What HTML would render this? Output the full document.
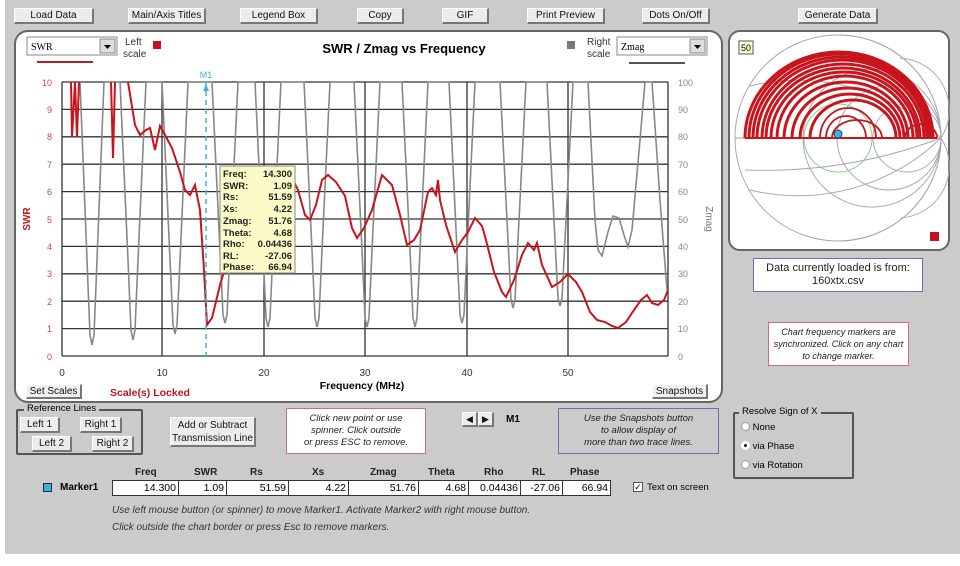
<!DOCTYPE html>
<html><head><meta charset="utf-8"><style>
*{margin:0;padding:0;box-sizing:border-box}
body{width:960px;height:566px;background:#fff;position:relative;overflow:hidden;font-family:"Liberation Sans",sans-serif;}
.bg{position:absolute;left:5px;top:0;width:955px;height:554px;background:#cbcbcb}
.a{position:absolute}
.btn{position:absolute;height:16px;background:#ececec;border:1px solid #fff;border-right:2px solid #777;border-bottom:2px solid #777;font-size:10px;text-align:center;line-height:13px;color:#111}
.box{position:absolute;background:#fff;font-style:italic;font-size:9.5px;text-align:center;line-height:12px;color:#222}
.grp{position:absolute;border:2px solid #555;border-radius:2px}
.cell{position:absolute;top:480px;height:16px;background:#fff;border:1px solid #333;font-size:10.5px;text-align:right;padding-right:2px;line-height:14px}
.hd{position:absolute;top:467px;font-size:10px;font-weight:bold;color:#222}
</style></head><body>
<div class="bg"></div>
<div class="btn" style="left:14px;top:8px;width:80px">Load Data</div>
<div class="btn" style="left:128px;top:8px;width:78px">Main/Axis Titles</div>
<div class="btn" style="left:240px;top:8px;width:78px">Legend Box</div>
<div class="btn" style="left:357px;top:8px;width:47px">Copy</div>
<div class="btn" style="left:442px;top:8px;width:47px">GIF</div>
<div class="btn" style="left:527px;top:8px;width:78px">Print Preview</div>
<div class="btn" style="left:642px;top:8px;width:68px">Dots On/Off</div>
<div class="btn" style="left:798px;top:8px;width:80px">Generate Data</div>

<div class="a" style="left:14px;top:30px;width:709px;height:373px;background:#fff;border:2px solid #666;border-radius:14px"></div>
<div class="a" style="left:728px;top:30px;width:222px;height:221px;background:#fff;border:2px solid #666;border-radius:12px"></div>

<svg class="a" style="left:0;top:0" width="960" height="566" xmlns="http://www.w3.org/2000/svg" font-family="Liberation Sans, sans-serif">
<rect x="27" y="37" width="90" height="18" fill="#fff" stroke="#888"/>
<text x="31" y="50" font-size="10" font-family="Liberation Serif">SWR</text>
<rect x="100" y="39" width="15" height="14" fill="#ddd" stroke="#888"/>
<path d="M104 45 L111 45 L107.5 49Z" fill="#000"/>
<line x1="37" y1="62" x2="93" y2="62" stroke="#b52025" stroke-width="2"/>
<text x="125" y="45" font-size="10" fill="#333">Left</text><text x="123" y="57" font-size="10" fill="#333">scale</text>
<rect x="153" y="41" width="8" height="8" fill="#c0141c"/>
<text x="404" y="53" font-size="13" font-weight="bold" text-anchor="middle">SWR / Zmag  vs  Frequency</text>
<rect x="567" y="41" width="8" height="8" fill="#777"/>
<text x="587" y="45" font-size="10" fill="#333">Right</text><text x="587" y="57" font-size="10" fill="#333">scale</text>
<rect x="617" y="37" width="90" height="18" fill="#fff" stroke="#888"/>
<text x="621" y="50" font-size="10" font-family="Liberation Serif">Zmag</text>
<rect x="690" y="39" width="15" height="14" fill="#ddd" stroke="#888"/>
<path d="M694 45 L701 45 L697.5 49Z" fill="#000"/>
<line x1="629" y1="63" x2="685" y2="63" stroke="#555" stroke-width="2"/>
<g stroke="#333" stroke-width="1.3">
<line x1="62" y1="82" x2="668" y2="82"/><line x1="62" y1="109.4" x2="668" y2="109.4"/><line x1="62" y1="136.8" x2="668" y2="136.8"/><line x1="62" y1="164.2" x2="668" y2="164.2"/><line x1="62" y1="191.6" x2="668" y2="191.6"/><line x1="62" y1="219" x2="668" y2="219"/><line x1="62" y1="246.4" x2="668" y2="246.4"/><line x1="62" y1="273.8" x2="668" y2="273.8"/><line x1="62" y1="301.2" x2="668" y2="301.2"/><line x1="62" y1="328.6" x2="668" y2="328.6"/><line x1="62" y1="356" x2="668" y2="356"/>
<line x1="62" y1="82" x2="62" y2="356"/><line x1="162" y1="82" x2="162" y2="356"/><line x1="264" y1="82" x2="264" y2="356"/><line x1="365" y1="82" x2="365" y2="356"/><line x1="467" y1="82" x2="467" y2="356"/><line x1="568" y1="82" x2="568" y2="356"/><line x1="668" y1="82" x2="668" y2="356"/>
</g>
<g font-size="9" fill="#c44" text-anchor="end">
<text x="52" y="86">10</text><text x="52" y="113">9</text><text x="52" y="140">8</text><text x="52" y="168">7</text><text x="52" y="195">6</text><text x="52" y="223">5</text><text x="52" y="250">4</text><text x="52" y="277">3</text><text x="52" y="305">2</text><text x="52" y="332">1</text><text x="52" y="360">0</text>
</g>
<g font-size="9" fill="#888">
<text x="678" y="86">100</text><text x="678" y="113">90</text><text x="678" y="140">80</text><text x="678" y="168">70</text><text x="678" y="195">60</text><text x="678" y="223">50</text><text x="678" y="250">40</text><text x="678" y="277">30</text><text x="678" y="305">20</text><text x="678" y="332">10</text><text x="678" y="360">0</text>
</g>
<g font-size="10" fill="#333" text-anchor="middle">
<text x="62" y="376">0</text><text x="162" y="376">10</text><text x="264" y="376">20</text><text x="365" y="376">30</text><text x="467" y="376">40</text><text x="568" y="376">50</text>
</g>
<text x="30" y="219" font-size="10" font-weight="bold" fill="#c0141c" transform="rotate(-90 30 219)" text-anchor="middle">SWR</text>
<text x="706" y="219" font-size="10" fill="#777" transform="rotate(90 706 219)" text-anchor="middle">Zmag</text>
<text x="362" y="389" font-size="10.5" font-weight="bold" text-anchor="middle">Frequency (MHz)</text>
<text x="110" y="396" font-size="10.5" font-weight="bold" fill="#c0141c">Scale(s) Locked</text>
<path d="M80 82 L87 260 L90 335 L92 345 L94 335 L97 260 L104 82 L120 82 L128 260 L131 330 L133 340 L135 330 L138 260 L146 82 L162 82 L170 260 L173 325 L175 334 L177 325 L180 260 L188 82 L212 82 L220 250 L223 315 L225 323 L227 315 L230 250 L238 82 L255 82 L263 250 L266 318 L268 327 L270 318 L273 250 L281 82 L304 82 L312 250 L315 318 L317 327 L319 318 L322 250 L330 82 L354 82 L362 250 L365 318 L367 327 L369 318 L372 250 L380 82 L402 82 L410 250 L413 318 L415 327 L417 318 L420 250 L428 82 L449 82 L457 250 L460 315 L462 323 L464 315 L467 250 L475 82 L500 82 L508 240 L511 300 L513 308 L515 300 L518 240 L526 82 L547 82 L555 240 L558 298 L560 306 L562 298 L565 240 L573 82 L588 82 L595 220 L598 250 L602 256 L608 232 L613 216 L619 218 L624 235 L628 247 L632 230 L640 140 L645 82 L652 82 L660 200 L667 290" fill="none" stroke="#888" stroke-width="1.6"/>
<path d="M71 82 L72 137 L75 82 L77 137 L79 82 M111 82 L113 158 L115 82 M128 82 L135 125 L140 135 L146 130 L150 128 L155 150 L160 126 L165 135 L172 148 L180 172 L185 190 L190 195 L195 185 L200 210 L204 270 L207 325 L212 318 L220 285 L226 265 M293 180 L298 190 L305 215 L310 220 L316 205 L322 180 L328 175 L336 182 L345 196 L352 228 L357 238 L364 228 L372 210 L382 175 L392 185 L400 215 L407 245 L414 240 L420 230 L428 192 L432 188 L436 195 L438 180 L440 200 L446 225 L455 252 L462 240 L468 232 L475 218 L482 226 L486 240 L494 272 L502 292 L506 297 L514 280 L522 255 L528 243 L534 250 L537 243 L542 265 L552 287 L560 282 L568 274 L576 282 L582 292 L590 312 L597 320 L605 322 L612 326 L618 328 L626 322 L634 310 L641 300 L647 295 L652 303 L658 305 L664 300 L668 290" fill="none" stroke="#c8141c" stroke-width="2"/>
<line x1="206" y1="82" x2="206" y2="358" stroke="#3bb3d0" stroke-width="1.5" stroke-dasharray="5 4"/>
<text x="206" y="78" font-size="9" fill="#3bb3d0" text-anchor="middle">M1</text>
<path d="M206 84 L203 91 L209 91Z" fill="#3bb3d0"/>
<rect x="220" y="166" width="75" height="107" fill="#fbfbc8" stroke="#888"/>
<g font-size="9.5" font-weight="bold" fill="#222">
<text x="223" y="177">Freq:</text><text x="223" y="189">SWR:</text><text x="223" y="200">Rs:</text><text x="223" y="212">Xs:</text><text x="223" y="224">Zmag:</text><text x="223" y="236">Theta:</text><text x="223" y="247">Rho:</text><text x="223" y="259">RL:</text><text x="223" y="270">Phase:</text>
</g>
<g font-size="9.5" font-weight="bold" fill="#222" text-anchor="end">
<text x="292" y="177">14.300</text><text x="292" y="189">1.09</text><text x="292" y="200">51.59</text><text x="292" y="212">4.22</text><text x="292" y="224">51.76</text><text x="292" y="236">4.68</text><text x="292" y="247">0.04436</text><text x="292" y="259">-27.06</text><text x="292" y="270">66.94</text>
</g>
<g fill="none" stroke="#aaa" stroke-width="1">
<circle cx="838" cy="138" r="103"/>
<line x1="735" y1="138" x2="941" y2="138"/>
<circle cx="872" cy="138" r="69"/>
<circle cx="889" cy="138" r="52"/>
<circle cx="907" cy="138" r="34"/>
<path d="M941 138 A206 206 0 0 1 750 190"/>
<path d="M941 138 A103 103 0 0 1 838 241"/>
<path d="M941 138 A52 52 0 0 1 900 218"/>
<path d="M941 138 A206 206 0 0 0 750 86"/>
<path d="M941 138 A103 103 0 0 0 838 35"/>
<path d="M941 138 A52 52 0 0 0 900 58"/>
<path d="M941 138 A500 500 0 0 1 745 170"/>
</g>
<circle cx="838" cy="138" r="34" fill="none" stroke="#8c8" stroke-width="1"/>
<g fill="none" stroke="#c8141c" stroke-width="3">
<path d="M745 138 A94 86 0 0 1 933 138"/><path d="M749 138 A91 84 0 0 1 931 138"/><path d="M753 138 A88 81 0 0 1 929 138"/><path d="M757 138 A85 78 0 0 1 927 138"/><path d="M762 138 A81 74 0 0 1 924 138"/><path d="M766 138 A77 70 0 0 1 920 138"/><path d="M771 138 A73 66 0 0 1 917 138"/><path d="M777 138 A68 62 0 0 1 913 138"/><path d="M784 138 A62 56 0 0 1 908 138"/><path d="M792 138 A56 50 0 0 1 904 138"/><path d="M800 138 A50 44 0 0 1 900 138"/><path d="M810 138 A43 38 0 0 1 896 138"/>
</g>
<g fill="none" stroke="#c8141c" stroke-width="1.8">
<path d="M820 138 A28 30 0 0 1 876 138"/><path d="M826 138 A20 22 0 0 1 866 138"/><path d="M832 138 A25 18 0 0 1 882 138"/><path d="M905 138 A16 14 0 0 1 937 138"/>
</g>
<line x1="745" y1="138" x2="937" y2="138" stroke="#c8141c" stroke-width="2"/>
<circle cx="838" cy="134" r="4" fill="#3bb3d0" stroke="#246" stroke-width="1"/>
<rect x="739" y="41" width="14" height="13" fill="#ffffd8" stroke="#555"/>
<text x="741" y="51" font-size="9">50</text>
<rect x="930" y="232" width="9" height="9" fill="#c0141c"/>
</svg>

<div class="btn" style="left:26px;top:384px;width:56px;height:15px;background:#f0f0f0">Set Scales</div>
<div class="btn" style="left:652px;top:384px;width:56px;height:15px;background:#f0f0f0">Snapshots</div>

<div class="box" style="left:753px;top:258px;width:170px;height:34px;border:1.5px solid #6670aa;font-style:normal;font-size:11px;line-height:13px;padding-top:3px">Data currently  loaded is from:<br>160xtx.csv</div>
<div class="box" style="left:768px;top:322px;width:141px;height:44px;border:1.5px solid #d07070;font-size:9px;line-height:12px;padding-top:3px">Chart frequency markers are synchronized.  Click on any chart to change marker.</div>

<div class="grp" style="left:16px;top:409px;width:127px;height:46px"></div>
<div class="a" style="left:24px;top:403px;background:#cbcbcb;font-size:9.5px;padding:0 3px">Reference Lines</div>
<div class="btn" style="left:20px;top:417px;width:40px">Left 1</div>
<div class="btn" style="left:80px;top:417px;width:42px">Right 1</div>
<div class="btn" style="left:32px;top:436px;width:40px">Left 2</div>
<div class="btn" style="left:92px;top:436px;width:42px">Right 2</div>
<div class="btn" style="left:170px;top:417px;width:86px;height:30px;line-height:13px;padding-top:1px">Add or Subtract<br>Transmission Line</div>
<div class="box" style="left:286px;top:408px;width:140px;height:46px;border:1.5px solid #d07070;padding-top:4px">Click new point or use<br>spinner.  Click outside<br>or press ESC to remove.</div>
<div class="btn" style="left:462px;top:412px;width:16px;height:15px;font-size:9px">◀</div>
<div class="btn" style="left:478px;top:412px;width:16px;height:15px;font-size:9px">▶</div>
<div class="a" style="left:506px;top:414px;font-size:10px;font-weight:bold">M1</div>
<div class="box" style="left:558px;top:408px;width:161px;height:46px;border:1.5px solid #6670aa;background:#cbcbcb;padding-top:4px">Use the Snapshots button<br>to allow display of<br>more than two trace lines.</div>

<div class="grp" style="left:733px;top:412px;width:121px;height:67px"></div>
<div class="a" style="left:739px;top:406px;background:#cbcbcb;font-size:9.5px;padding:0 3px">Resolve Sign of X</div>
<div class="a" style="left:741px;top:422px;font-size:9.5px"><span style="display:inline-block;width:9px;height:9px;border-radius:50%;background:#fff;border:1px solid #999;vertical-align:-1px"></span> None</div>
<div class="a" style="left:741px;top:441px;font-size:9.5px"><span style="display:inline-block;width:9px;height:9px;border-radius:50%;background:#fff;border:3px solid #fff;box-shadow:inset 0 0 0 2px #000;vertical-align:-1px"></span> via Phase</div>
<div class="a" style="left:741px;top:460px;font-size:9.5px"><span style="display:inline-block;width:9px;height:9px;border-radius:50%;background:#fff;border:1px solid #999;vertical-align:-1px"></span> via Rotation</div>

<div class="hd" style="left:135px">Freq</div><div class="hd" style="left:194px">SWR</div><div class="hd" style="left:250px">Rs</div><div class="hd" style="left:312px">Xs</div><div class="hd" style="left:370px">Zmag</div><div class="hd" style="left:428px">Theta</div><div class="hd" style="left:484px">Rho</div><div class="hd" style="left:532px">RL</div><div class="hd" style="left:570px">Phase</div>
<div class="a" style="left:43px;top:483px;width:9px;height:9px;background:#3bb3d0;border:1px solid #226"></div>
<div class="a" style="left:60px;top:482px;font-size:10px;font-weight:bold">Marker1</div>
<div class="cell" style="left:112px;width:67px">14.300</div>
<div class="cell" style="left:178px;width:49px">1.09</div>
<div class="cell" style="left:226px;width:63px">51.59</div>
<div class="cell" style="left:288px;width:61px">4.22</div>
<div class="cell" style="left:348px;width:71px">51.76</div>
<div class="cell" style="left:418px;width:51px">4.68</div>
<div class="cell" style="left:468px;width:53px">0.04436</div>
<div class="cell" style="left:520px;width:43px">-27.06</div>
<div class="cell" style="left:562px;width:49px">66.94</div>
<div class="a" style="left:633px;top:482px;width:10px;height:10px;background:#fff;border:1px solid #555;font-size:9px;line-height:8px;text-align:center">✓</div>
<div class="a" style="left:647px;top:482px;font-size:9.5px">Text on screen</div>
<div class="a" style="left:112px;top:505px;font-size:10px;font-style:italic;color:#333">Use left mouse button (or spinner) to move Marker1.  Activate Marker2 with right mouse button.</div>
<div class="a" style="left:112px;top:522px;font-size:10px;font-style:italic;color:#333">Click outside the chart border or press Esc to remove markers.</div>
</body></html>
